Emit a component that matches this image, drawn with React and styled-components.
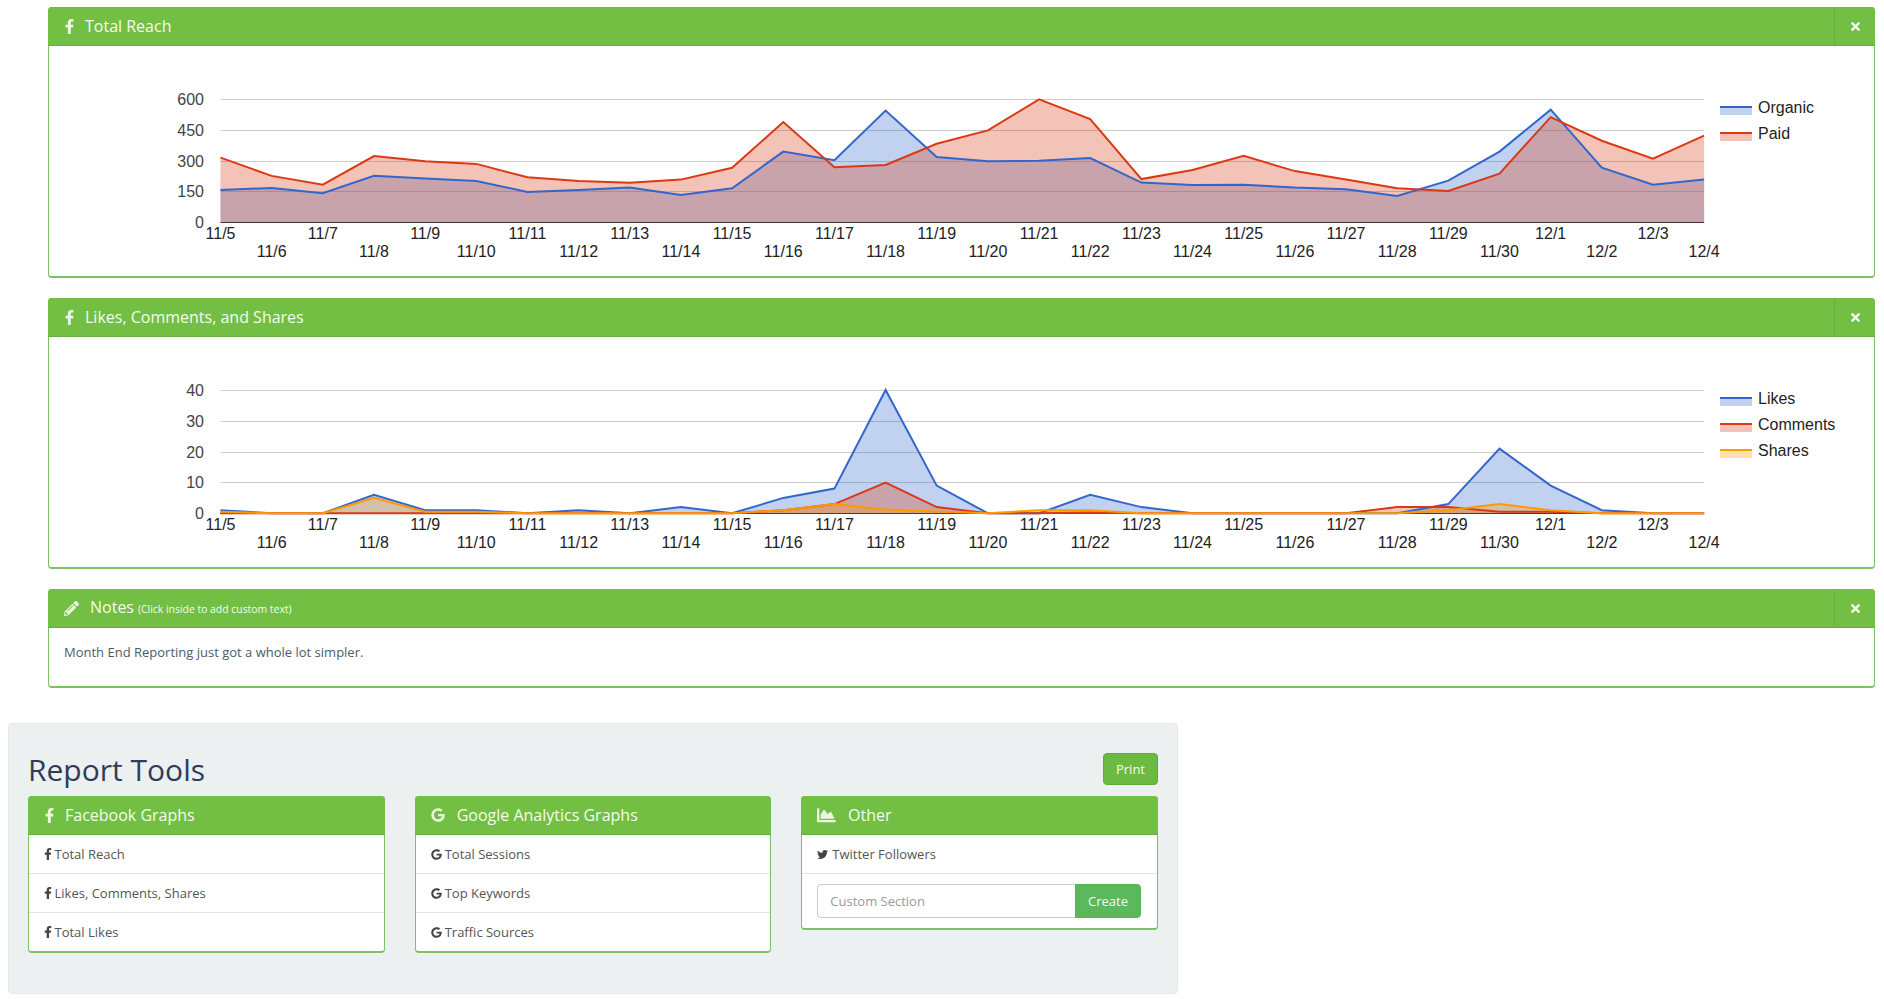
import React from 'react';
import styled, { createGlobalStyle } from 'styled-components';
import { FaFacebookF, FaGoogle, FaTwitter, FaChartArea, FaPencilAlt, FaTimes } from 'react-icons/fa';

const GREEN = '#72bf44';
const EDGE = '#7cc162';
const SANS = '"Open Sans", "Liberation Sans", sans-serif';
const ARIAL = '"Liberation Sans", Arial, sans-serif';

const Global = createGlobalStyle`
  html, body { margin: 0; padding: 0; background: #fff; }
  body { font-family: ${SANS}; font-size: 13px; color: #4d5b69; }
`;

const Page = styled.div`
  box-sizing: border-box;
  width: 1884px;
  padding: 7px 9px 6px 8px;
`;
const Reports = styled.div`
  padding-left: 40px;
  margin-bottom: 35px;
`;
const Panel = styled.section`
  box-sizing: border-box;
  background: #fff;
  border: 1px solid ${EDGE};
  border-bottom-width: 2px;
  border-radius: 4px;
  margin-bottom: ${p => p.$flush ? 0 : 20}px;
`;
const PanelHead = styled.header`
  box-sizing: border-box;
  display: flex;
  align-items: center;
  margin: -1px -1px 0;
  height: 39px;
  padding-left: 16px;
  background: ${GREEN};
  border-bottom: 1px solid #68ad3f;
  border-radius: 4px 4px 0 0;
  color: #fff;
`;
const HeadIcon = styled.span`
  display: flex;
  color: #eaf6e2;
  margin-left: ${p => p.$lead || 0}px;
  margin-right: ${p => p.$gap}px;
  svg { display: block; height: ${p => p.$size}px; width: auto; }
`;
const HeadTitle = styled.h3`
  flex: 1;
  margin: 0;
  font-size: 16px;
  font-weight: 400;
  line-height: 18px;
  color: #f4fbef;
`;
const HeadNote = styled.small`
  font-size: 10.4px;
  margin-left: 4px;
`;
const CloseBox = styled.button`
  align-self: stretch;
  width: 41px;
  padding: 0;
  display: flex;
  align-items: center;
  justify-content: center;
  background: none;
  border: 0;
  border-left: 1px solid #68ad3f;
  color: #f2faec;
  svg { display: block; width: auto; height: 13px; }
`;
const ChartBox = styled.svg`
  display: block;
  width: 1825px;
  height: 230px;
`;
const YLabel = styled.text`
  font-family: ${ARIAL};
  font-size: 16px;
  fill: #444;
  text-anchor: end;
`;
const XLabel = styled.text`
  font-family: ${ARIAL};
  font-size: 16px;
  fill: #222;
  text-anchor: middle;
`;
const LegendLabel = styled.text`
  font-family: ${ARIAL};
  font-size: 16px;
  fill: #222;
`;
const NoteBody = styled.p`
  margin: 0;
  padding: 16px 13px 25px 15px;
  line-height: 17px;
  font-size: 13px;
  color: #4d5b69;
`;
const Well = styled.section`
  box-sizing: border-box;
  width: 1170px;
  padding: 19px 19px 40px;
  background: #ecf0f1;
  border: 1px solid #e4e8e9;
  border-radius: 4px;
`;
const ToolsBar = styled.div`
  display: flex;
  justify-content: space-between;
  align-items: flex-start;
  padding: 10px 0;
`;
const ToolsTitle = styled.h2`
  margin: 0;
  font-size: 30px;
  font-weight: 400;
  line-height: 33px;
  color: #2f3b59;
`;
const PrintButton = styled.button`
  box-sizing: border-box;
  width: 55px;
  height: 32px;
  padding: 0;
  font-family: ${SANS};
  font-size: 13px;
  color: #f4fbef;
  background: #6dba42;
  border: 1px solid #5fac38;
  border-radius: 4px;
`;
const ToolsGrid = styled.div`
  display: grid;
  grid-template-columns: repeat(3, 1fr);
  gap: 30px;
  align-items: start;
`;
const ToolRow = styled.div`
  box-sizing: border-box;
  display: flex;
  align-items: center;
  padding: 0 14px 0 15px;
  border-top: ${p => p.$first ? 0 : 1}px solid #e3e6e8;
  height: ${p => p.$first ? 38 : 39}px;
  font-size: 13px;
  color: #555;
`;
const RowIcon = styled.span`
  display: flex;
  color: #444;
  margin-left: ${p => p.$lead || 0}px;
  margin-right: ${p => p.$gap}px;
  svg { display: block; height: ${p => p.$size}px; width: auto; }
`;
const FormRow = styled.div`
  display: flex;
  padding: 10px 16px 10px 15px;
  border-top: 1px solid #e3e6e8;
`;
const TextField = styled.input`
  box-sizing: border-box;
  flex: 1;
  min-width: 0;
  height: 34px;
  padding: 0 12px;
  font-family: ${SANS};
  font-size: 13px;
  color: #555;
  background: #fff;
  border: 1px solid #ccc;
  border-right: 0;
  border-radius: 4px 0 0 4px;
  outline: none;
  &::placeholder { color: #999; opacity: 1; }
`;
const CreateButton = styled.button`
  box-sizing: border-box;
  width: 66px;
  height: 34px;
  padding: 0;
  font-family: ${SANS};
  font-size: 13px;
  color: #f4fbef;
  background: #5cb85c;
  border: 1px solid #58b358;
  border-radius: 0 4px 4px 0;
`;

const BLUE = '#3366cc';
const RED = '#dc3912';
const ORANGE = '#ff9900';
const X0 = 171.5;
const STEP = 51.16;
const TOP = 53;
const BASE = 176.3;

const days = [];
for (let d = 5; d <= 30; d++) days.push(`11/${d}`);
for (let d = 1; d <= 4; d++) days.push(`12/${d}`);

const reach = [
  { name: 'Organic', color: BLUE, values: [157,167,141,227,213,201,148,157,169,133,166,344,302,544,318,297,300,313,193,182,183,169,161,128,203,344,548,266,183,208] },
  { name: 'Paid', color: RED, values: [315,226,183,322,297,284,219,201,192,208,265,488,268,279,382,447,598,502,210,255,323,249,208,166,153,237,512,397,310,422] },
];
const engagement = [
  { name: 'Likes', color: BLUE, values: [1,0,0,6,1,1,0,1,0,2,0,5,8,40,9,0,0,6,2,0,0,0,0,0,3,21,9,1,0,0] },
  { name: 'Comments', color: RED, values: [0,0,0,0,0,0,0,0,0,0,0,1,3,10,2,0,0,0.3,0,0,0,0,0,2,2,0.5,0.5,0,0,0] },
  { name: 'Shares', color: ORANGE, values: [0.5,0,0,5,0.5,0.5,0,0,0,0,0,1,3,1.2,0.6,0,1,1,0,0,0,0,0,0,1,3,1,0,0,0] },
];

function LineAreaChart({ series, ticks, max }) {
  const scale = (BASE - TOP) / max;
  const px = i => X0 + STEP * i;
  const py = v => BASE - v * scale;
  const gridY = i => Math.round(TOP + i * 30.75);
  const pointsOf = s => s.values.map((v, i) => `${px(i).toFixed(1)},${py(v).toFixed(1)}`).join(' ');
  return (
    <ChartBox viewBox="0 0 1825 230">
      {ticks.map((t, i) => (
        <g key={t}>
          {i < ticks.length - 1 && <rect x={X0} y={gridY(i)} width={STEP * 29} height="1" fill="#ccc" />}
          <YLabel x="155" y={gridY(i) + 5.5}>{t}</YLabel>
        </g>
      ))}
      <rect x={X0} y={176} width={STEP * 29} height="1" fill="#333" />
      {series.map(s => (
        <polygon key={s.name} points={`${X0},${BASE} ${pointsOf(s)} ${px(29)},${BASE}`} fill={s.color} fillOpacity="0.3" />
      ))}
      {series.map(s => (
        <polyline key={s.name} points={pointsOf(s)} fill="none" stroke={s.color} strokeWidth="2" />
      ))}
      {days.map((d, i) => (
        <XLabel key={d} x={px(i)} y={i % 2 ? 211 : 193}>{d}</XLabel>
      ))}
      {series.map((s, i) => (
        <g key={s.name}>
          <rect x="1671" y={60 + 26 * i} width="32" height="9" fill={s.color} fillOpacity="0.3" />
          <rect x="1671" y={60 + 26 * i} width="32" height="2" fill={s.color} />
          <LegendLabel x="1709" y={67 + 26 * i}>{s.name}</LegendLabel>
        </g>
      ))}
    </ChartBox>
  );
}

function ReportPanel({ icon, size, gap, lead, title, note, children }) {
  return (
    <Panel>
      <PanelHead>
        <HeadIcon $size={size} $gap={gap} $lead={lead}>{icon}</HeadIcon>
        <HeadTitle>{title}{note && <HeadNote>{note}</HeadNote>}</HeadTitle>
        <CloseBox aria-label="Close"><FaTimes /></CloseBox>
      </PanelHead>
      {children}
    </Panel>
  );
}

function ToolCard({ icon, size, gap, lead, title, children }) {
  return (
    <Panel $flush>
      <PanelHead>
        <HeadIcon $size={size} $gap={gap} $lead={lead}>{icon}</HeadIcon>
        <HeadTitle>{title}</HeadTitle>
      </PanelHead>
      {children}
    </Panel>
  );
}

function Tool({ icon, size, gap, lead, label, first }) {
  return (
    <ToolRow $first={first}>
      <RowIcon $size={size} $gap={gap} $lead={lead}>{icon}</RowIcon>
      {label}
    </ToolRow>
  );
}

const FbTool = props => <Tool icon={<FaFacebookF />} size={12} gap={1} lead={-2.5} {...props} />;
const GaTool = props => <Tool icon={<FaGoogle />} size={11} gap={3} {...props} />;

export default function App() {
  return (
    <Page>
      <Global />
      <Reports>
        <ReportPanel icon={<FaFacebookF />} size={15} gap={8.5} lead={-2.5} title="Total Reach">
          <LineAreaChart series={reach} ticks={[600, 450, 300, 150, 0]} max={600} />
        </ReportPanel>
        <ReportPanel icon={<FaFacebookF />} size={15} gap={8.5} lead={-2.5} title="Likes, Comments, and Shares">
          <LineAreaChart series={engagement} ticks={[40, 30, 20, 10, 0]} max={40} />
        </ReportPanel>
        <ReportPanel icon={<FaPencilAlt />} size={15} gap={11} title="Notes" note="(Click inside to add custom text)">
          <NoteBody>Month End Reporting just got a whole lot simpler.</NoteBody>
        </ReportPanel>
      </Reports>
      <Well>
        <ToolsBar>
          <ToolsTitle>Report Tools</ToolsTitle>
          <PrintButton>Print</PrintButton>
        </ToolsBar>
        <ToolsGrid>
          <ToolCard icon={<FaFacebookF />} size={15} gap={8.5} lead={-2.5} title="Facebook Graphs">
            <FbTool first label="Total Reach" />
            <FbTool label="Likes, Comments, Shares" />
            <FbTool label="Total Likes" />
          </ToolCard>
          <ToolCard icon={<FaGoogle />} size={14} gap={12} title="Google Analytics Graphs">
            <GaTool first label="Total Sessions" />
            <GaTool label="Top Keywords" />
            <GaTool label="Traffic Sources" />
          </ToolCard>
          <ToolCard icon={<FaChartArea />} size={18.7} gap={12} title="Other">
            <Tool first icon={<FaTwitter />} size={11} gap={4} label="Twitter Followers" />
            <FormRow>
              <TextField placeholder="Custom Section" />
              <CreateButton>Create</CreateButton>
            </FormRow>
          </ToolCard>
        </ToolsGrid>
      </Well>
    </Page>
  );
}
